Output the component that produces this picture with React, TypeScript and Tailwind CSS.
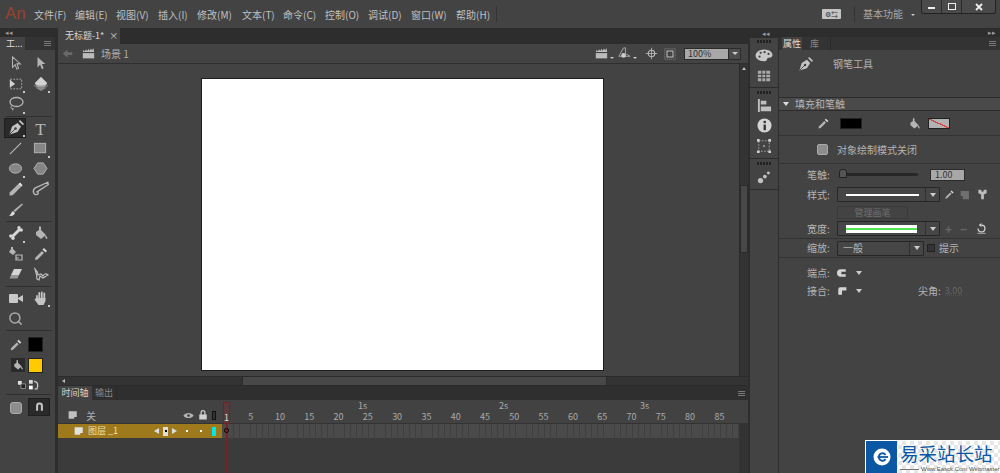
import React from "react";
import { Search } from "lucide-react";

type IP = { s?: number; c?: string; children: React.ReactNode };
function I({ s = 16, c = "#b4b4b4", children }: IP) {
  return (
    <svg width={s} height={s} viewBox="0 0 16 16" fill={c} stroke="none" className="shrink-0">
      {children}
    </svg>
  );
}

const Pen = ({ s = 16 }: { s?: number }) => (
  <I s={s} c="#c4c4c4">
    <path d="M1.500 14.500 L4 6.500 L9.500 3 L13 6.500 L9.500 12 Z" />
    <path d="M10.800 1.200 L12 0 L16 4 L14.800 5.200 Z" />
    <path d="M2 14 L6.800 9.200" stroke="#3a3a3a" strokeWidth=".9" />
    <circle cx="7.500" cy="8.500" r="1.300" fill="#3a3a3a" />
  </I>
);
const Bucket = ({ s = 16 }: { s?: number }) => (
  <I s={s}>
    <path d="M6 2 L7 1 L8 2 L8 5 L13 10 L8 14 L3 10 L3 7 L6 5 Z" />
    <path d="M12 10 C14 11 15 13 14 14 C13 14.500 12 12 12 10 Z" />
  </I>
);
const Dropper = ({ s = 16 }: { s?: number }) => (
  <I s={s}>
    <path d="M11 2 L14 5 L12.500 6.500 L9.500 3.500 Z" fill="#dadada" />
    <path d="M9 5 L11 7 L4.500 13.500 L2 14 L2.500 11.500 Z" />
  </I>
);
const Clap = ({ s = 13 }: { s?: number }) => (
  <I s={s} c="#bbb">
    <path d="M1 7.500 H15 V14 H1 Z" />
    <path d="M1 6 L2 3.500 L3.500 5.500 L5 2.800 L6.500 5 L8 2.200 L9.500 4.500 L11 1.800 L12.500 4 L14 1.200 L15 6 Z" />
  </I>
);

const Sep = () => <div className="h-px bg-[#2f2f2f] mx-[3px] my-px" />;

function Tool({ children, tri, active }: { children?: React.ReactNode; tri?: boolean; active?: boolean }) {
  return (
    <div className="relative h-[20.5px] w-[25px] flex items-center justify-center">
      {active && <div className="absolute left-[1px] top-0 w-[22px] h-[20px] bg-[#2a2a2a] border border-[#1d1d1d]" />}
      <div className="relative">{children}</div>
      {tri && <div className="absolute right-[3px] bottom-[1px] w-[2px] h-[2px] bg-[#c8c8c8]" />}
    </div>
  );
}

function MenuGrip() {
  return (
    <div className="flex flex-col gap-px justify-center">
      <div className="w-[7px] h-px bg-[#777]" /><div className="w-[7px] h-px bg-[#777]" /><div className="w-[7px] h-px bg-[#777]" />
    </div>
  );
}

function Toolbar() {
  return (
    <div className="w-[55px] shrink-0 flex flex-col bg-[#434343]">
      <div className="h-[9px] bg-[#2d2d2d] flex items-center pl-[5px] text-[#999] text-[7px] leading-none">◂◂</div>
      <div className="h-[13px] flex bg-[#333] ">
        <div className="w-[25px] bg-[#434343] text-[9px] leading-[13px] text-[#ddd] pl-[6px]">工...</div>
        <div className="flex-1 flex justify-end pr-[4px]"><MenuGrip /></div>
      </div>
      <div className="pl-[3px] pt-[2px] flex flex-col">
        <div className="grid grid-cols-[25px_25px] pt-[1px]">
          <Tool><I s={14}><path d="M4 1 V13 L7 10 L9 15 L11 14 L9 9 L13 9 Z" fill="none" stroke="#b4b4b4" strokeWidth="1.200" /></I></Tool>
          <Tool><I s={14}><path d="M4 1 V13 L7 10 L9 15 L11 14 L9 9 L13 9 Z" /></I></Tool>
          <Tool tri><I s={14}><rect x="1.500" y="2.500" width="13" height="11" fill="none" stroke="#b4b4b4" strokeDasharray="2 1.500" /><path d="M1 3 V12 L7 8 Z" fill="#d5d5d5" /></I></Tool>
          <Tool tri><I s={16}><path d="M8 1 L14 7 A6 6 0 0 1 2 7 Z" fill="#9e9e9e" /><path d="M8 1 L14 7 A6 2.500 0 0 1 2 7 Z" fill="#d2d2d2" /><path d="M1 9 A7 3 0 0 0 15 9" fill="none" stroke="#777" /><path d="M3 12 H13 L8 15 Z" fill="#8a8a8a" /></I></Tool>
          <Tool tri><I s={16}><ellipse cx="8.500" cy="6" rx="6.500" ry="4.500" fill="none" stroke="#b4b4b4" strokeWidth="1.300" /><path d="M4 10 C2 11 3 13 5 12.500 C6 12 5 14 4 14.500" fill="none" stroke="#b4b4b4" /></I></Tool>
          <Tool />
        </div>
        <Sep />
        <div className="grid grid-cols-[25px_25px]">
          <Tool tri active><Pen /></Tool>
          <Tool><span className="text-[17px] leading-none text-[#b8b8b8] [font-family:'Liberation_Serif',serif]">T</span></Tool>
          <Tool><I s={15}><path d="M2 14 L14 2" stroke="#bcbcbc" strokeWidth="1.100" /></I></Tool>
          <Tool tri><I s={15}><rect x="1.500" y="2.500" width="12" height="10" fill="#858585" stroke="#b4b4b4" /></I></Tool>
          <Tool tri><I s={15}><ellipse cx="8" cy="8" rx="6.500" ry="5" fill="#858585" stroke="#b4b4b4" /></I></Tool>
          <Tool><I s={15}><path d="M5 2 H11 L15 8 L11 14 H5 L1 8 Z" fill="#858585" stroke="#b4b4b4" /></I></Tool>
          <Tool><I s={15}><path d="M11 2 L14 5 L5 14 L1.500 14.500 L2 11 Z" /><path d="M11 2 L13 0.500 L15.500 3.500 L14 5 Z" fill="#e4e4e4" /></I></Tool>
          <Tool><I s={18}><path d="M14 2 L3 7 C0 9 1 13 4 13 C6 13 6 11 4.500 10.500 L14.500 4 Z" fill="none" stroke="#b8b8b8" strokeWidth="1.200" /></I></Tool>
          <Tool><I s={16}><path d="M14 1.500 L15 2.500 L7 10 L5.500 8.500 Z" /><path d="M5 9 L7 11 C6 14 3 14.500 1 13.500 C3 13 3 10 5 9 Z" fill="#dadada" /></I></Tool>
          <Tool />
        </div>
        <Sep />
        <div className="grid grid-cols-[25px_25px]">
          <Tool tri><I s={16}><path d="M4 12 L12 4" stroke="#d8d8d8" strokeWidth="3" /><circle cx="2.800" cy="11" r="1.700" fill="#d8d8d8" /><circle cx="5" cy="13.200" r="1.700" fill="#d8d8d8" /><circle cx="11" cy="2.800" r="1.700" fill="#d8d8d8" /><circle cx="13.200" cy="5" r="1.700" fill="#d8d8d8" /></I></Tool>
          <Tool><Bucket /></Tool>
          <Tool><I s={16}><path d="M3 1 L5 1 L5 3 L8 6 L5 9 L1 6 L3 3 Z" /><path d="M8 9 H14 V14 H8 Z" fill="none" stroke="#b8b8b8" strokeWidth="1.200" /><path d="M8 12 L11 12" stroke="#b8b8b8" /></I></Tool>
          <Tool><Dropper /></Tool>
          <Tool><I s={16}><path d="M6 3 H14 L11 9 H3 Z" fill="#d4d4d4" /><path d="M3 9 H11 L9.500 12.500 H1.500 Z" fill="#969696" /></I></Tool>
          <Tool><I s={16}><path d="M2 3 C4 5 5 7 5 9 L8 8 L10 10 C11 8 13 7 15 9 C13 10 12 11 10 12 L7 10 L6 14 L4 13 L3.500 9 Z" fill="none" stroke="#bcbcbc" strokeWidth="1.200" /></I></Tool>
        </div>
        <Sep />
        <div className="grid grid-cols-[25px_25px]">
          <Tool><I s={16}><rect x="1" y="4" width="9" height="9" rx="1" fill="#c8c8c8" /><path d="M10 8 L15 5 V12 L10 9 Z" fill="#c8c8c8" /></I></Tool>
          <Tool tri><I s={16} c="#c4c4c4"><path d="M4 6 V9 M6.300 3 V9 M8.800 2.500 V9 M11.300 3.500 V9" stroke="#c4c4c4" strokeWidth="1.800" strokeLinecap="round" /><path d="M3.500 8 H12.500 L12.500 11 L10.500 15 H5.500 L1.500 9.500 L2.500 8.500 L3.500 9 Z" /></I></Tool>
          <Tool><Search size={15} color="#a8a8a8" strokeWidth={2.4} /></Tool>
          <Tool />
        </div>
        <Sep />
        <div className="grid grid-cols-[25px_25px] mt-[3px]">
          <Tool><Dropper s={14} /></Tool>
          <div className="h-[20px] flex items-center"><div className="w-[15px] h-[15px] bg-black border border-[#222]" /></div>
          <Tool><div className="w-[14px] h-[14px] ml-[4px] bg-[#2a2a2a] flex items-center justify-center"><Bucket s={12} /></div></Tool>
          <div className="h-[20px] flex items-center"><div className="w-[15px] h-[15px] bg-[#ffcb00] border border-[#222]" /></div>
        </div>
        <div className="h-[16px] flex items-center justify-center gap-[3px] pr-[3px] mt-[1px]">
          <I s={9}><rect x="1" y="1" width="8" height="8" fill="#ddd" stroke="#222" /><rect x="7" y="7" width="8" height="8" fill="#222" stroke="#ccc" /></I>
          <I s={10}><rect x="0" y="0" width="6" height="6" fill="#ddd" /><rect x="0" y="9" width="6" height="6" fill="#fff" /><path d="M8 2 C14 2 15 8 13 13 M9 14 H14" fill="none" stroke="#ccc" strokeWidth="2" /></I>
        </div>
        <Sep />
        <div className="grid grid-cols-[25px_25px] mt-[2px]">
          <Tool><div className="w-[12px] h-[12px] bg-[#8d8d8d] border border-[#aaa] rounded-[3px]" /></Tool>
          <div className="w-[22px] h-[18px] bg-[#2a2a2a] border border-[#1f1f1f] flex items-center justify-center">
            <I s={11}><path d="M3 14 V7 A5 5 0 0 1 13 7 V14 H10 V7 A2 2 0 0 0 6 7 V14 Z" fill="#c4c4c4" /></I>
          </div>
        </div>
      </div>
    </div>
  );
}

const menus: [string, string][] = [
  ["文件(F)", "w-[41px]"], ["编辑(E)", "w-[41px]"], ["视图(V)", "w-[42px]"], ["插入(I)", "w-[39px]"], ["修改(M)", "w-[45px]"],
  ["文本(T)", "w-[41px]"], ["命令(C)", "w-[42px]"], ["控制(O)", "w-[43px]"], ["调试(D)", "w-[43px]"], ["窗口(W)", "w-[45px]"], ["帮助(H)", "w-[40px]"],
];

function TopBar() {
  return (
    <div className="h-[28px] shrink-0 bg-[#434343] flex items-start text-[#c0c0c0] text-[10px]">
      <div className="w-[34px] pl-[5px] h-[28px] text-[17px] leading-[27px] text-[#96432c] [font-family:'Liberation_Sans',sans-serif]">An</div>
      <div className="flex h-[28px] items-center">
        {menus.map(([t, w]) => <div key={t} className={w}>{t}</div>)}
      </div>
      <div className="w-px h-[16px] bg-[#333] mt-[6px]" />
      <div className="ml-[325px] mt-[9px] w-[19px] h-[10px] bg-[#c4c4c4] rounded-[1px] flex items-center justify-center text-[#333] text-[7px] leading-none">⚙⇆</div>
      <div className="w-px h-[16px] bg-[#333] mt-[6px] ml-[13px]" />
      <div className="ml-[8px] h-[28px] leading-[27px] text-[#aaa]">基本功能</div>
      <div className="ml-[8px] mt-[14px] w-0 h-0 border-x-[2px] border-x-transparent border-t-[2px] border-t-[#ccc]" />
      <div className="ml-[6px] h-[14px] flex border border-t-0 border-[#222] rounded-b-[3px] bg-[#4a4a4a]">
        <div className="w-[20px] flex items-center justify-center border-r border-[#2a2a2a]"><div className="w-[7px] h-[2px] bg-[#eee] mt-[3px]" /></div>
        <div className="w-[20px] flex items-center justify-center border-r border-[#2a2a2a]"><div className="w-[8px] h-[7px] border border-[#eee]" /></div>
        <div className="w-[33px] flex items-center justify-center">
          <svg width="8" height="8" viewBox="0 0 8 8"><path d="M1 1 L7 7 M7 1 L1 7" stroke="#eee" strokeWidth="1.800" /></svg>
        </div>
      </div>
    </div>
  );
}

function EditBar() {
  return (
    <div className="h-[20px] shrink-0 bg-[#434343] border-b border-[#2f2f2f] flex items-center text-[10px] text-[#b0b0b0] pl-[4px]">
      <I s={11} c="#6a6a6a"><path d="M1 8 L8 2 V6 H15 V10 H8 V14 Z" /></I>
      <div className="ml-[9px]"><Clap /></div>
      <span className="ml-[6px]">场景 1</span>
      <div className="ml-auto flex items-center">
        <Clap />
        <div className="ml-[2px] mt-[8px] w-0 h-0 border-x-[2px] border-x-transparent border-t-[2px] border-t-[#ccc]" />
        <div className="ml-[3px]"><I s={15} c="#aaa"><path d="M7 2 L9 2 L9 8 L14 11 H2 Z" fill="none" stroke="#aaa" /><circle cx="7" cy="10" r="2.500" fill="#ccc" /></I></div>
        <div className="ml-[1px] mt-[8px] w-0 h-0 border-x-[2px] border-x-transparent border-t-[2px] border-t-[#ccc]" />
        <div className="ml-[8px]"><I s={13}><circle cx="8" cy="8" r="4" fill="none" stroke="#bbb" strokeWidth="1.400" /><path d="M8 1 V15 M1 8 H15" stroke="#bbb" /></I></div>
        <div className="ml-[6px]"><I s={12}><rect x="1" y="1" width="14" height="14" fill="none" stroke="#888" strokeDasharray="1.500 1" /><rect x="4" y="4" width="8" height="8" fill="none" stroke="#bbb" strokeWidth="1.400" /></I></div>
        <div className="ml-[8px] w-[57px] h-[12px] border border-[#2b2b2b] flex">
          <div className="w-[43px] bg-[#a8a8a8] text-[#333] text-[9px] leading-[10px] pl-[3px]">100%</div>
          <div className="flex-1 bg-[#4d4d4d] flex items-center justify-center border-l border-[#2b2b2b]">
            <div className="w-0 h-0 border-x-[3px] border-x-transparent border-t-[3px] border-t-[#ccc]" />
          </div>
        </div>
        <div className="w-[7px]" />
      </div>
    </div>
  );
}

const Triangle = ({ d }: { d: "u" | "l" }) =>
  d === "u" ? (
    <div className="w-0 h-0 border-x-[2.500px] border-x-transparent border-b-[3px] border-b-[#bbb]" />
  ) : (
    <div className="w-0 h-0 border-y-[2.500px] border-y-transparent border-r-[3px] border-r-[#bbb]" />
  );

function Stage() {
  return (
    <div className="flex-1 min-h-0 flex">
      <div className="flex-1 bg-[#434343] pl-[144px] pt-[14px]">
        <div className="ml-[-1px] w-[403px] h-[293px] bg-white border border-[#1e1e1e]" />
      </div>
      <div className="w-[9px] shrink-0 bg-[#333] flex flex-col items-center border-l border-[#2b2b2b]">
        <div className="h-[9px] pt-[3px]"><Triangle d="u" /></div>
        <div className="mt-[112px] w-full h-[68px] bg-[#484848] border border-[#2b2b2b]" />
      </div>
    </div>
  );
}

function HScroll() {
  return (
    <div className="h-[10px] shrink-0 flex bg-[#333] border-y border-[#2b2b2b]">
      <div className="w-[10px] flex items-center justify-center"><Triangle d="l" /></div>
      <div className="ml-[174px] w-[365px] bg-[#484848] border-x border-[#2b2b2b]" />
    </div>
  );
}

const rulerNums = [5, 10, 15, 20, 25, 30, 35, 40, 45, 50, 55, 60, 65, 70, 75, 80, 85];

function Timeline() {
  return (
    <div className="h-[87px] shrink-0 flex flex-col bg-[#3b3b3b] relative">
      <div className="h-[14px] bg-[#2f2f2f] flex text-[9px] leading-[14px] text-[#888]">
        <div className="w-[34px] bg-[#434343] text-[#d4d4d4] text-center">时间轴</div>
        <div className="w-[25px] text-center border-r border-[#2a2a2a]">输出</div>
        <div className="ml-auto mr-[3px] flex"><MenuGrip /></div>
      </div>
      <div className="h-[24px] bg-[#424242] border-b border-[#333] flex">
        <div className="w-[164px] shrink-0 flex items-center pl-[10px] pt-[7px] text-[10px] text-[#b0b0b0] relative">
          <I s={10} c="#c0c0c0"><path d="M1 2 H14 V11 H10 V14 H1 Z" /></I>
          <span className="ml-[8px]">关</span>
          <div className="ml-auto mr-[6px] flex items-center gap-[4px]">
            <I s={11}><path d="M0.500 8 C4 3 12 3 15.500 8 C12 13 4 13 0.500 8 Z" /><circle cx="8" cy="8" r="2" fill="#444" /></I>
            <I s={10}><path d="M2 7 H14 V15 H2 Z M4 7 V4 A4 4 0 0 1 12 4 V7 H10 V4 A2 2 0 0 0 6 4 V7 Z" fill="#d0d0d0" /></I>
            <div className="w-[4px] h-[9px] border border-[#111] bg-[#333]" />
          </div>
        </div>
        <div className="flex-1 flex flex-col pl-[14px] text-[9px] text-[#aaa] leading-[12px]">
          <div className="h-[11px] flex items-center">
            <span className="ml-[122px] w-[141px]">1s</span><span className="w-[141px]">2s</span><span>3s</span>
          </div>
          <div className="h-[12px] flex items-end">
            {rulerNums.map(n => <span key={n} className="w-[29.300px] shrink-0 text-center">{n}</span>)}
          </div>
        </div>
      </div>
      <div className="h-[14px] flex">
        <div className="w-[164px] shrink-0 bg-[#9f7a1c] flex items-center text-[9px] text-[#eee0b5] pl-[16px]">
          <I s={10} c="#e0e0e0"><path d="M1 2 H14 V11 H10 V14 H1 Z" /></I>
          <span className="ml-[4px]">图层 _1</span>
          <div className="ml-auto flex items-center">
            <div className="w-0 h-0 border-y-[3px] border-y-transparent border-r-[5px] border-r-[#ddd]" />
            <div className="ml-[4px] w-[5px] h-[9px] bg-[#ddd] flex items-center justify-center"><div className="w-[2px] h-[2px] bg-black" /></div>
            <div className="ml-[4px] w-0 h-0 border-y-[3px] border-y-transparent border-l-[5px] border-l-[#ddd]" />
            <div className="ml-[9px] w-[2px] h-[2px] bg-white" />
            <div className="ml-[12px] w-[2px] h-[2px] bg-white" />
            <div className="ml-[10px] w-[4px] h-[9px] bg-[#00e6e6]" />
            <div className="w-[6px]" />
          </div>
        </div>
        <div className="flex-1 bg-[repeating-linear-gradient(90deg,#4a4a4a_0_5px,#404040_5px_5.870px)]" />
        <div className="w-[9px] shrink-0 bg-[#333]" />
      </div>
      <div className="absolute left-[165px] top-[16px] w-[7px] h-[22px] border border-[#7a1f1f] bg-[#5a3a3a] text-[9px] leading-[30px] text-[#ddd] text-center">1</div>
      <div className="absolute left-[168px] top-[38px] bottom-0 w-px bg-[#7a2020]" />
      <div className="absolute left-[166px] top-[42px] w-[5px] h-[5px] rounded-full border border-black" />
      <div className="absolute right-0 top-[38px] bottom-0 w-[9px] bg-[#333]" />
    </div>
  );
}

function Grip() {
  return (
    <div className="h-[5px] flex items-center justify-center gap-px">
      {[0, 1, 2, 3, 4].map(i => <div key={i} className="w-[2px] h-[3px] bg-[#222]" />)}
    </div>
  );
}

function Dock() {
  return (
    <div className="w-[28px] shrink-0 flex flex-col bg-[#434343]">
      <div className="h-[10px] bg-[#2d2d2d] text-[7px] leading-[10px] text-right pr-[8px] text-[#999]">◂◂</div>
      <div className="h-[50px] border-b border-[#2c2c2c] flex flex-col items-center pt-[1px]">
        <Grip />
        <div className="mt-[2px]"><I s={18} c="#c8c8c8"><path d="M8 3 C13 3 15.500 5.500 15.500 8 C15.500 11 12 10 11 11 C10 12 11 13.500 8 13.500 C3 13.500 0.500 11 0.500 8.500 C0.500 5.500 4 3 8 3 Z" /><circle cx="5" cy="6" r="1" fill="#444" /><circle cx="8.500" cy="5.500" r="1" fill="#444" /><circle cx="12" cy="7" r="1" fill="#444" /><circle cx="4" cy="9.500" r="1" fill="#444" /></I></div>
        <div className="mt-[5px]"><I s={14} c="#aaa"><path d="M1 2 H15 V14 H1 Z" /><path d="M1 6 H15 M1 10 H15 M5.500 2 V14 M10 2 V14" stroke="#333" /></I></div>
      </div>
      <div className="h-[71px] border-b border-[#2c2c2c] flex flex-col items-center pt-[2px]">
        <Grip />
        <div className="mt-[3px]"><I s={15} c="#c0c0c0"><path d="M1 1 H3 V15 H1 Z M4 3 H10 V7 H4 Z M4 9 H15 V14 H4 Z" /></I></div>
        <div className="mt-[5px]"><I s={15} c="#d4d4d4"><circle cx="8" cy="8" r="7.500" /><rect x="7" y="7" width="2.500" height="6" fill="#333" /><rect x="7" y="3" width="2.500" height="2.500" fill="#333" /></I></div>
        <div className="mt-[6px]"><I s={14} c="#aaa"><rect x="2" y="2" width="12" height="12" fill="none" stroke="#aaa" strokeDasharray="2 1.500" /><rect x="7" y="7" width="2" height="2" /><path d="M0 0 H3 V3 H0 Z M13 0 H16 V3 H13 Z M0 13 H3 V16 H0 Z M13 13 H16 V16 H13 Z" fill="#d0d0d0" /></I></div>
      </div>
      <div className="h-[31px] border-b border-[#2c2c2c] flex flex-col items-center pt-[2px]">
        <Grip />
        <div className="mt-[4px]"><I s={14} c="#c0c0c0"><circle cx="4" cy="12" r="3" /><circle cx="9" cy="7.500" r="2.200" /><circle cx="13" cy="3.500" r="1.700" /></I></div>
      </div>
    </div>
  );
}

function Label({ children }: { children: React.ReactNode }) {
  return <div className="w-[58px] pl-[28px] text-[#b4b4b4] shrink-0">{children}</div>;
}
function Select({ className, children }: { className: string; children?: React.ReactNode }) {
  return (
    <div className={`${className} h-[15px] border border-[#262626] rounded-[1px] bg-[#464646] flex`}>
      <div className="flex-1 flex items-center min-w-0">{children}</div>
      <div className="w-[14px] border-l border-[#303030] flex items-center justify-center">
        <div className="w-0 h-0 border-x-[3px] border-x-transparent border-t-[4px] border-t-[#ccc]" />
      </div>
    </div>
  );
}

function Props() {
  return (
    <div className="flex-1 min-w-0 flex flex-col bg-[#434343] text-[10px] text-[#b4b4b4] leading-none">
      <div className="h-[9px] bg-[#2d2d2d] text-[7px] leading-[9px] text-right pr-[4px] text-[#999]">▸▸</div>
      <div className="h-[13px] bg-[#333] flex leading-[13px] text-[9px]">
        <div className="ml-[3px] w-[20px] bg-[#434343] text-[#ddd] text-center">属性</div>
        <div className="w-[29px] pl-[8px] text-[#888] border-r border-[#2a2a2a]">库</div>
        <div className="ml-auto mr-[4px] flex"><MenuGrip /></div>
      </div>
      <div className="h-[47px] flex pl-[19px] pt-[7px]">
        <Pen s={15} />
        <span className="ml-[20px] mt-[2px]">钢笔工具</span>
      </div>
      <div className="h-[14px] bg-[#4a4a4a] border-y border-[#2c2c2c] flex items-center pl-[4px]">
        <div className="w-0 h-0 border-x-[3px] border-x-transparent border-t-[4px] border-t-[#ddd]" />
        <span className="ml-[6px]">填充和笔触</span>
      </div>
      <div className="h-[25px] border-b border-[#333] flex items-center">
        <div className="ml-[38px]"><Dropper s={13} /></div>
        <div className="ml-[10px] w-[22px] h-[11px] bg-black border border-[#222]" />
        <div className="ml-[46px]"><Bucket s={13} /></div>
        <div className="ml-[7px] w-[22px] h-[11px] border border-[#222] bg-[linear-gradient(to_top_right,#b3b3b3_46%,#d04a4a_46%,#d04a4a_54%,#b3b3b3_54%)]" />
      </div>
      <div className="h-[28px] border-b border-[#333] flex items-center">
        <div className="ml-[38px] w-[11px] h-[11px] rounded-[2px] bg-[#8d8d8d] border border-[#aaa]" />
        <span className="ml-[9px]">对象绘制模式关闭</span>
      </div>
      <div className="h-[75px] border-b border-[#333] flex flex-col pt-[3px]">
        <div className="h-[15px] flex items-center">
          <Label>笔触:</Label>
          <div className="relative w-[79px] h-[3px] bg-[#272727] rounded-sm ml-[2px]">
            <div className="absolute left-0 top-[-4px] w-[8px] h-[9px] bg-[#555] border border-[#222] rounded-t-[3px]" />
          </div>
          <div className="ml-[12px] w-[35px] h-[12px] bg-[#a8a8a8] border border-[#2b2b2b] text-[#333] text-[9px] leading-[10px] pl-[4px]">1.00</div>
        </div>
        <div className="h-[15px] mt-[5px] flex items-center">
          <Label>样式:</Label>
          <Select className="w-[103px]"><div className="ml-[8px] w-[73px] h-[2px] bg-white" /></Select>
          <div className="ml-[4px]"><Dropper s={11} /></div>
          <div className="ml-[5px]"><I s={11} c="#6f6f6f"><path d="M1 3 H13 V15 H4 V10 H1 Z" /></I></div>
          <div className="ml-[6px]"><I s={11} c="#bbb"><path d="M2 1 H6 L7 4 H9 L10 1 H14 V6 L10 8 V15 H6 V8 L2 6 Z" /></I></div>
        </div>
        <div className="ml-[58px] mt-[4px] w-[71px] h-[13px] border border-[#3a3a3a] text-center text-[#6f6f6f] text-[9px] leading-[11px]">管理画笔</div>
        <div className="h-[15px] mt-[2px] flex items-center">
          <Label>宽度:</Label>
          <Select className="w-[103px]"><div className="ml-[8px] w-[71px] h-[8px] bg-white flex items-center"><div className="w-full h-[2px] bg-[#55e655]" /></div></Select>
          <span className="ml-[5px] text-[#666] text-[12px] font-bold">+</span>
          <span className="ml-[8px] text-[#666] text-[12px] font-bold">−</span>
          <div className="ml-[9px]"><I s={11} c="#d4d4d4"><path d="M8 3 A5 5 0 1 1 3 8" fill="none" stroke="#d4d4d4" strokeWidth="1.800" /><path d="M8 0 V6 L4 3 Z" /><path d="M2 15 H14" stroke="#d4d4d4" /></I></div>
        </div>
      </div>
      <div className="h-[19px] border-b border-[#333] flex items-center">
        <Label>缩放:</Label>
        <Select className="w-[87px]"><span className="ml-[5px]">一般</span></Select>
        <div className="ml-[3px] w-[8px] h-[8px] bg-[#333] border border-[#222]" />
        <span className="ml-[4px]">提示</span>
      </div>
      <div className="h-[15px] mt-[7px] flex items-center">
        <Label>端点:</Label>
        <I s={10} c="#d4d4d4"><path d="M14 2 H6 A6 6 0 0 0 6 14 H14 V10 H7 V6 H14 Z" /></I>
        <div className="ml-[9px] w-0 h-0 border-x-[3px] border-x-transparent border-t-[4px] border-t-[#ccc]" />
      </div>
      <div className="h-[15px] mt-[3px] flex items-center">
        <Label>接合:</Label>
        <I s={10} c="#d4d4d4"><path d="M2 14 V5 A3 3 0 0 1 5 2 H15 V7 H8 V14 Z" /></I>
        <div className="ml-[9px] w-0 h-0 border-x-[3px] border-x-transparent border-t-[4px] border-t-[#ccc]" />
        <span className="ml-[56px]">尖角:</span>
        <span className="ml-[4px] text-[#666] text-[9px] border-b border-dotted border-[#555]">3.00</span>
      </div>
    </div>
  );
}

function Watermark() {
  return (
    <div className="absolute right-0 bottom-0 w-[135px] h-[33px] flex bg-white bg-[repeating-conic-gradient(#e6e6e6_0%_25%,#ffffff_0%_50%)] bg-[length:8px_8px] border-l border-t border-white">
      <div className="w-[31px] h-[32px] bg-[#0b57a4] flex items-center justify-center shrink-0">
        <svg width="18" height="18" viewBox="0 0 18 18">
          <circle cx="9" cy="9" r="8.500" fill="#fff" />
          <path d="M6 9 A3.500 3.500 0 0 1 12.500 7 M12.500 11 A3.500 3.500 0 0 1 6 9" fill="none" stroke="#0b57a4" strokeWidth="1.800" />
          <path d="M4.500 9 H15" stroke="#0b57a4" strokeWidth="1.800" />
        </svg>
      </div>
      <div className="flex-1 min-w-0 flex flex-col pl-[3px]">
        <div className="text-[18.500px] leading-[24px] text-[#0b57a4] whitespace-nowrap">易采站长站</div>
        <div className="flex items-center h-[8px]">
          <div className="w-[19px] h-px bg-[#777] shrink-0" />
          <div className="ml-[2px] text-[6px] leading-[8px] text-[#555] whitespace-nowrap [font-family:'Liberation_Sans',sans-serif]">Www.Easck.Com Webmaster</div>
        </div>
      </div>
    </div>
  );
}

export default function App() {
  return (
    <div className="relative w-[1000px] h-[473px] overflow-hidden bg-[#2b2b2b] flex flex-col [font-family:'Noto_Sans_CJK_SC','Liberation_Sans',sans-serif]">
      <TopBar />
      <div className="flex-1 min-h-0 flex">
        <Toolbar />
        <div className="w-[3px] shrink-0 bg-[#2d2d2d]" />
        <div className="w-[690px] shrink-0 flex flex-col">
          <div className="h-[16px] shrink-0 bg-[#2d2d2d] flex">
            <div className="w-[62px] bg-[#434343] text-[9px] leading-[16px] text-[#d8d8d8] pl-[7px]">无标题-1* <span className="ml-[3px]">×</span></div>
          </div>
          <EditBar />
          <Stage />
          <HScroll />
          <Timeline />
        </div>
        <div className="w-[2px] shrink-0 bg-[#2d2d2d]" />
        <Dock />
        <div className="w-[1px] shrink-0 bg-[#2d2d2d]" />
        <Props />
      </div>
      <Watermark />
    </div>
  );
}
